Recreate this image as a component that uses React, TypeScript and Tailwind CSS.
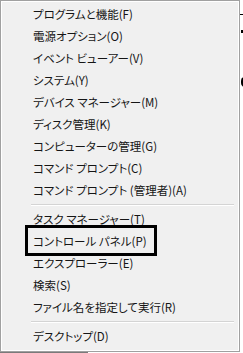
const groups: string[][] = [
  [
    "プログラムと機能(F)",
    "電源オプション(O)",
    "イベント ビューアー(V)",
    "システム(Y)",
    "デバイス マネージャー(M)",
    "ディスク管理(K)",
    "コンピューターの管理(G)",
    "コマンド プロンプト(C)",
    "コマンド プロンプト (管理者)(A)",
  ],
  [
    "タスク マネージャー(T)",
    "コントロール パネル(P)",
    "エクスプローラー(E)",
    "検索(S)",
    "ファイル名を指定して実行(R)",
  ],
  ["デスクトップ(D)"],
];

const Separator = () => (
  <div className="h-[7px] pt-[2px] pl-[29px] pr-[4px] flex flex-col">
    <div className="h-px bg-[#d4d4d4]" />
    <div className="h-px bg-white" />
  </div>
);

export default function App() {
  return (
    <div
      className="relative w-[243px] h-[353px] bg-white overflow-hidden flex"
      style={{ fontFamily: '"Noto Sans CJK JP", "Noto Sans", sans-serif' }}
    >
      {/* Menu */}
      <div className="w-[240px] h-[352px] border border-[#a0a0a0] bg-[#f0f0f0]">
        <div className="h-full border border-white py-[2px] flex flex-col">
          {groups.map((items, gi) => (
            <div key={gi} className="flex flex-col">
              {gi > 0 && <Separator />}
              {items.map((label) => (
                <div
                  key={label}
                  className="h-[22px] flex items-center pl-[31px] text-[11.5px] [font-feature-settings:'palt'] text-[#151515] whitespace-nowrap"
                >
                  {label}
                </div>
              ))}
            </div>
          ))}
        </div>
      </div>

      {/* Highlight box around Control Panel */}
      <div className="absolute left-[25px] top-[225px] w-[132px] h-[31px] border-[3px] border-black" />

      {/* Bits of the window behind */}
      <div className="absolute left-[240px] top-[14px] w-[3px] h-px bg-black" />
      <div className="absolute left-[241px] top-[30px] w-[2px] h-[3px] bg-black" />
      <div className="absolute left-[241px] top-[77px] w-[4px] h-[10px] border-l-2 border-y border-black rounded-l-full" />
      <div className="absolute left-0 bottom-0 w-[88px] h-px bg-[#7a7a7a]" />
    </div>
  );
}
